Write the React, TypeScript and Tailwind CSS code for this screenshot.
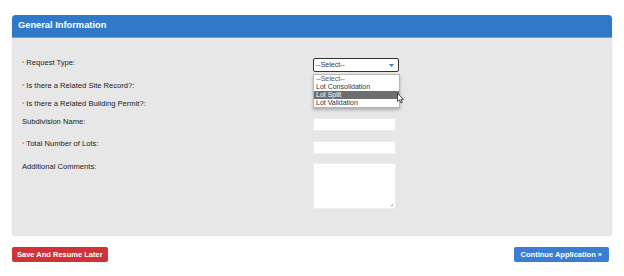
import React from "react";

const Star = () => <span className="text-[#d9583a] mr-[2px] text-[6px] align-top">*</span>;

export default function App() {
  return (
    <div className="w-[624px] h-[276px] bg-white overflow-hidden" style={{ fontFamily: '"Liberation Sans", Arial, sans-serif' }}>
      <div className="pt-[15px] pl-[12px] pr-[12px]">
        <div className="rounded-[4px] bg-[#e7e7e7] shadow-[0_0_1px_rgba(0,0,0,0.25)]">
          <div className="h-[23px] rounded-t-[4px] bg-[#3079c9] border-b border-[#6aa0dc] flex items-center pl-[6px] text-white font-bold text-[9.3px]">
            General Information
          </div>
          <div className="pt-[20px] pb-[27px] pl-[10px] text-[7.6px] leading-[10px] text-[#222]">
            {/* Row 1 */}
            <div className="flex h-[23px]">
              <div className="w-[291px]"><Star />Request Type:</div>
              <div className="relative">
                <div className="w-[86px] h-[14px] bg-white border border-[#333] rounded-[2px] flex items-center justify-between pl-[2px] pr-[4px] text-[7px] text-[#333]">
                  <span>--Select--</span>
                  <svg width="5" height="3" viewBox="0 0 5 3"><path d="M0 0H5L2.5 3Z" fill="#3a7fd0" /></svg>
                </div>
                <div className="absolute left-0 top-[16px] w-[87px] bg-white border border-[#b5b5b5] shadow-[0_2px_3px_rgba(0,0,0,0.25)] text-[7px] leading-[8px] text-[#333] z-10">
                  <div className="px-[2px] text-[#555]">--Select--</div>
                  <div className="px-[2px]">Lot Consolidation</div>
                  <div className="px-[2px] bg-[#6e6e6e] text-white">Lot Split</div>
                  <div className="px-[2px]">Lot Validation</div>
                </div>
                <svg className="absolute left-[84px] top-[35px] z-20" width="8" height="11" viewBox="0 0 8 11">
                  <path d="M0.5 0.5 L0.5 8.5 L2.5 6.8 L4 10 L5.3 9.4 L3.9 6.3 L6.6 6.3 Z" fill="white" stroke="#222" strokeWidth="0.8" strokeLinejoin="round" />
                </svg>
              </div>
            </div>
            {/* Row 2 */}
            <div className="flex h-[18px]">
              <div className="w-[291px]"><Star />Is there a Related Site Record?:</div>
            </div>
            {/* Row 3 */}
            <div className="flex h-[18px]">
              <div className="w-[291px]"><Star />Is there a Related Building Permit?:</div>
            </div>
            {/* Row 4 */}
            <div className="flex h-[22px]">
              <div className="w-[291px]">Subdivision Name:</div>
              <div className="mt-[1px] w-[83px] h-[13px] bg-white border border-[#eeeeee]" />
            </div>
            {/* Row 5 */}
            <div className="flex h-[23px]">
              <div className="w-[291px]"><Star />Total Number of Lots:</div>
              <div className="mt-[2px] w-[83px] h-[13px] bg-white border border-[#eeeeee]" />
            </div>
            {/* Row 6 */}
            <div className="flex">
              <div className="w-[291px]">Additional Comments:</div>
              <div className="relative mt-[1px] w-[83px] h-[46px] bg-white border border-[#eeeeee]">
                <svg className="absolute right-[1px] bottom-[1px]" width="4" height="4" viewBox="0 0 4 4">
                  <path d="M0.5 3.5 L3.5 0.5 M2 3.5 L3.5 2" stroke="#999" strokeWidth="0.6" />
                </svg>
              </div>
            </div>
          </div>
        </div>
      </div>
      <div className="flex justify-between pl-[12px] pr-[15px] mt-[11px]">
        <div className="h-[15px] px-[5px] flex items-center bg-[#cf3338] rounded-[2px] text-white font-bold text-[7.5px]">
          Save And Resume Later
        </div>
        <div className="h-[15px] px-[7px] flex items-center bg-[#3a7ed1] rounded-[2px] text-white font-bold text-[7.5px]">
          Continue Application »
        </div>
      </div>
    </div>
  );
}
